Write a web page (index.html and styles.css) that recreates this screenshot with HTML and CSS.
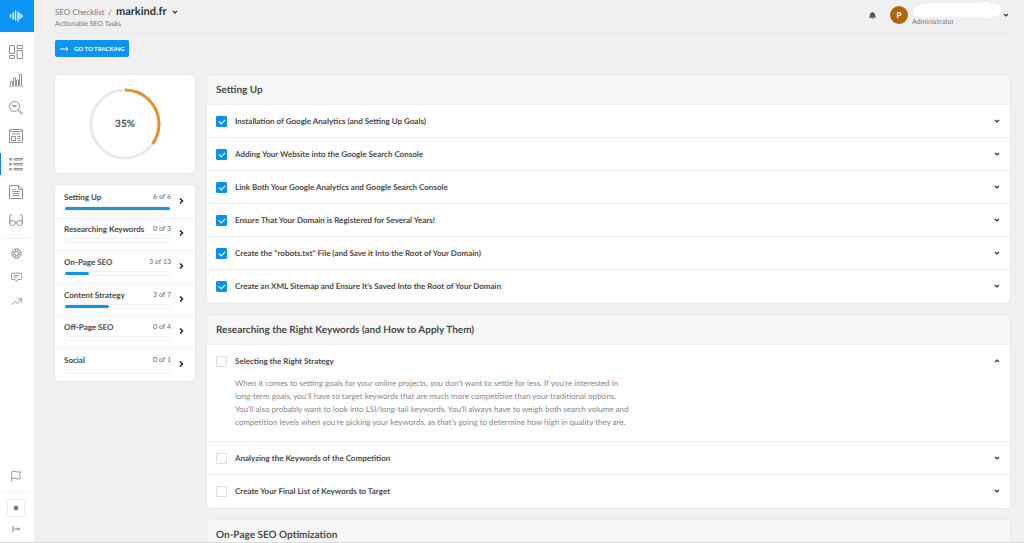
FILE: index.html
```html
<!DOCTYPE html>
<html lang="en">
<head>
<meta charset="utf-8">
<title>SEO Checklist</title>
<link rel="stylesheet" href="styles.css">
</head>
<body>
<svg class="defs" aria-hidden="true">
  <symbol id="down" viewBox="0 0 8 8"><path d="M2 3l2 2 2-2"/></symbol>
  <symbol id="up" viewBox="0 0 8 8"><path d="M2 5l2-2 2 2"/></symbol>
  <symbol id="right" viewBox="0 0 8 8"><path d="M3 1.500l2.500 2.500L3 6.500"/></symbol>
</svg>
<div class="app">
  <nav class="sidebar" aria-label="Main">
    <a class="logo" href="#" aria-label="Home"><svg viewBox="0 0 14 14"><path d="M1.500 5.500v3M4 3.500v7M6.500 1.500v10M9 2.500v10M11 4v6M13 5.500v3"/></svg></a>
    <div class="nav-main">
      <a href="#" aria-label="Dashboard"><svg viewBox="0 0 14 14"><path d="M.5.500h5v8h-5zM.5 10.500h5v3h-5zM8 .5h5.500v3H8zM8 5.500h5.500v8H8z"/></svg></a>
      <a href="#" aria-label="Rankings"><svg viewBox="0 0 14 14"><path d="M1.500 12V8.500h2V12M4.500 12V5h2v7M7.500 12V7h2v5M10.500 12V1.500h2V12M0 13h14"/></svg></a>
      <a href="#" aria-label="Keyword research"><svg viewBox="0 0 14 14"><circle cx="5.500" cy="5.500" r="5"/><path d="M3.500 4.500l2 2 2-2zM9.500 9l1 1M10 10.500l.8-.8 2.700 2.600-.9.900z"/></svg></a>
      <a href="#" aria-label="Site audit"><svg viewBox="0 0 14 14"><path d="M.5.500h13v13H.5zM.5 2.500h13M2.500 5h9M2.500 7.500h4v4h-4zM8.500 7.500h3M8.500 9.500h3M8.500 11.500h3"/></svg></a>
      <a class="active" href="#" aria-label="Checklist" aria-current="page"><svg viewBox="0 0 14 14"><path d="M.5 1.500h2v1.500h-2zM.5 6.500h2v1.500h-2zM.5 11.500h2v1.500h-2zM5 1.500h8.500v1.500H5zM5 6.500h8.500v1.500H5zM5 11.500h8.500v1.500H5z"/></svg></a>
      <a href="#" aria-label="Reports"><svg viewBox="0 0 14 14"><path d="M.5.500h9l4 4v9H.5zM9.500.5v4h4M3.500 4.500h3M3.500 6.500h7M3.500 8.500h7M3.500 10.500h7"/></svg></a>
      <a href="#" aria-label="Competitors"><svg viewBox="0 0 14 14"><circle cx="3.500" cy="10" r="2.700"/><circle cx="10.500" cy="10" r="2.700"/><path d="M6 9.500q1-1 2 0M.8 9.500V3q0-1.500 2-1.500M13.200 9.500V3q0-1.500-2-1.500"/></svg></a>
    </div>
    <div class="nav-more">
      <a href="#" aria-label="Support"><svg viewBox="0 0 14 14"><circle cx="7" cy="7" r="6"/><circle cx="7" cy="7" r="2.700"/><path d="M5.500 1.200v3.600M8.500 1.200v3.600M5.500 9.200v3.600M8.500 9.200v3.600M1.200 5.500h3.600M1.200 8.500h3.600M9.200 5.500h3.600M9.200 8.500h3.600"/></svg></a>
      <a href="#" aria-label="Feedback"><svg viewBox="0 0 14 14"><path d="M1.500 1.500h11q1 0 1 1v6q0 1-1 1H9l-2 2.500-2-2.500H1.500q-1 0-1-1v-6q0-1 1-1zM4 4.500h6M4 6.500h4"/></svg></a>
      <a href="#" aria-label="Trends"><svg viewBox="0 0 14 14"><path d="M.5 11l4.500-4 3 2.500 5-5.500M9 3.500h4.500V8"/></svg></a>
    </div>
    <div class="nav-end">
      <a href="#" aria-label="Tasks"><svg viewBox="0 0 14 14"><path d="M2 14V2q2.500-1 5 0t5.500 0l-1.500 4 1.500 4q-3 1-5.500 0T2 10"/></svg></a>
      <div class="tools">
        <button class="theme" aria-label="Theme"><svg viewBox="0 0 10 10"><circle cx="5" cy="5" r="1"/><path d="M5 2v6M2 5h6M3 3l4 4M7 3L3 7"/></svg></button>
        <button class="expand" aria-label="Expand menu"><svg viewBox="0 0 10 10"><path d="M2 2v6M3.500 5h5M7 3.500L8.500 5 7 6.500"/></svg></button>
      </div>
    </div>
  </nav>

  <div class="page">
    <header class="topbar">
      <div>
        <div class="crumbs"><a href="#">SEO Checklist</a><span>/</span><h1>markind.fr</h1><button class="chev" aria-label="Change site"><svg><use href="#down"/></svg></button></div>
        <p class="sub">Actionable SEO Tasks</p>
      </div>
      <div class="account">
        <button class="bell" aria-label="Notifications"><svg viewBox="0 0 10 10"><path d="M1 7.500q1.200-1 1.200-3.500Q2.200 1.500 5 1q2.800.5 2.800 3Q7.800 6.500 9 7.500zM4 8.300h2Q5.800 9.300 5 9.300T4 8.300z"/></svg></button>
        <span class="avatar">P</span>
        <div class="who">
          <svg class="mask" viewBox="0 0 92 17" aria-hidden="true"><path d="M3 15Q-1 11 4 6 9 2 18 2L64 2Q74 0 80 3 90 3 91 8 92 14 86 15 79 19 70 16L10 16z"/></svg>
          <span class="role">Administrator</span>
        </div>
        <button class="chev" aria-label="Account menu"><svg><use href="#down"/></svg></button>
      </div>
    </header>

    <button class="track"><svg viewBox="0 0 9 8"><path d="M0 4h8M6 2l2 2-2 2"/></svg>GO TO TRACKING</button>

    <div class="columns">
      <aside class="left">
        <div class="card score">
          <svg viewBox="0 0 72 72" role="img" aria-label="Progress ring"><circle class="ring" cx="36" cy="36" r="34"/><circle class="arc" cx="36" cy="36" r="34" pathLength="100" transform="rotate(-90 36 36)"/></svg>
          <strong>35%</strong>
        </div>
        <div class="card steps">
          <a href="#"><span>Setting Up</span><small>6 of 6</small><i class="bar"><b style="width:100%"></b></i><svg><use href="#right"/></svg></a>
          <a href="#"><span>Researching Keywords</span><small>0 of 3</small><i class="bar"><b style="width:0%"></b></i><svg><use href="#right"/></svg></a>
          <a href="#"><span>On-Page SEO</span><small>3 of 13</small><i class="bar"><b style="width:23%"></b></i><svg><use href="#right"/></svg></a>
          <a href="#"><span>Content Strategy</span><small>3 of 7</small><i class="bar"><b style="width:42%"></b></i><svg><use href="#right"/></svg></a>
          <a href="#"><span>Off-Page SEO</span><small>0 of 4</small><i class="bar"><b style="width:0%"></b></i><svg><use href="#right"/></svg></a>
          <a href="#"><span>Social</span><small>0 of 1</small><i class="bar"><b style="width:0%"></b></i><svg><use href="#right"/></svg></a>
        </div>
      </aside>

      <main class="right">
        <section class="card">
          <h2>Setting Up</h2>
          <div class="item"><div class="row"><label><input type="checkbox" checked>Installation of Google Analytics (and Setting Up Goals)</label><button class="chev" aria-label="Show details"><svg><use href="#down"/></svg></button></div></div>
          <div class="item"><div class="row"><label><input type="checkbox" checked>Adding Your Website into the Google Search Console</label><button class="chev" aria-label="Show details"><svg><use href="#down"/></svg></button></div></div>
          <div class="item"><div class="row"><label><input type="checkbox" checked>Link Both Your Google Analytics and Google Search Console</label><button class="chev" aria-label="Show details"><svg><use href="#down"/></svg></button></div></div>
          <div class="item"><div class="row"><label><input type="checkbox" checked>Ensure That Your Domain is Registered for Several Years!</label><button class="chev" aria-label="Show details"><svg><use href="#down"/></svg></button></div></div>
          <div class="item"><div class="row"><label><input type="checkbox" checked>Create the "robots.txt" File (and Save it Into the Root of Your Domain)</label><button class="chev" aria-label="Show details"><svg><use href="#down"/></svg></button></div></div>
          <div class="item"><div class="row"><label><input type="checkbox" checked>Create an XML Sitemap and Ensure It's Saved Into the Root of Your Domain</label><button class="chev" aria-label="Show details"><svg><use href="#down"/></svg></button></div></div>
        </section>
        <section class="card">
          <h2>Researching the Right Keywords (and How to Apply Them)</h2>
          <div class="item"><div class="row"><label><input type="checkbox">Selecting the Right Strategy</label><button class="chev" aria-label="Hide details"><svg><use href="#up"/></svg></button></div>
            <p class="detail">When it comes to setting goals for your online projects, you don't want to settle for less. If you're interested in long-term goals, you'll have to target keywords that are much more competitive than your traditional options. You'll also probably want to look into LSI/long-tail keywords. You'll always have to weigh both search volume and competition levels when you're picking your keywords, as that's going to determine how high in quality they are.</p></div>
          <div class="item"><div class="row"><label><input type="checkbox">Analyzing the Keywords of the Competition</label><button class="chev" aria-label="Show details"><svg><use href="#down"/></svg></button></div></div>
          <div class="item"><div class="row"><label><input type="checkbox">Create Your Final List of Keywords to Target</label><button class="chev" aria-label="Show details"><svg><use href="#down"/></svg></button></div></div>
        </section>
        <section class="card">
          <h2>On-Page SEO Optimization</h2>
        </section>
      </main>
    </div>
  </div>
</div>
</body>
</html>
```
FILE: styles.css
```css
* { box-sizing: border-box; }
body { margin: 0; background: #f0f0f0; color: #4a4a4a; font: 8px/12px Lato, "Liberation Sans", sans-serif; text-rendering: geometricPrecision; }
h1, h2, p { margin: 0; }
a { color: inherit; text-decoration: none; }
button { margin: 0; padding: 0; border: 0; background: none; color: inherit; font: inherit; cursor: pointer; }
svg { display: block; fill: none; stroke: currentColor; }
.defs { position: absolute; width: 0; height: 0; }

.app { display: flex; height: 100vh; overflow: hidden; border-bottom: 1px solid #dcdcdc; }

.sidebar { display: flex; flex-direction: column; flex: none; width: 34px; background: #fff; color: #888; }
.sidebar a { display: grid; place-items: center; padding-right: 2px; }
.sidebar .logo { height: 32px; background: #0a95f5; color: #fff; }
.logo svg { width: 14px; height: 14px; stroke-width: 1.3; }
.nav-main { padding-top: 6px; }
.nav-main a { position: relative; height: 28px; }
.nav-main svg { width: 14px; height: 14px; stroke-width: .9; }
.nav-main .active::before { content: ""; position: absolute; left: 0; top: 3px; bottom: 3px; width: 1px; background: #0a84d8; }
.nav-more { margin: 4px 3px 0; padding-top: 2px; border-top: 1px solid #f2f2f2; }
.nav-more a { height: 24px; }
.nav-more svg { width: 11px; height: 11px; stroke-width: 1.1; }
.nav-end { margin: auto 3px 0; }
.nav-end a { height: 32px; }
.nav-end a svg { width: 12px; height: 12px; stroke-width: 1; }
.tools { display: grid; justify-items: center; gap: 3px; padding: 6px 2px 4px 0; border-top: 1px solid #f2f2f2; }
.tools button { display: grid; place-items: center; width: 18px; height: 18px; color: #555; }
.tools svg { width: 10px; height: 10px; stroke-width: .8; }
.tools .theme { border: 1px solid #eee; border-radius: 2px; }
.theme circle { fill: currentColor; }

.page { flex: 1; min-width: 0; padding: 0 14px 0 21px; }
.topbar { display: flex; justify-content: space-between; height: 34px; padding-top: 5px; border-bottom: 1px solid #e6e6e6; color: #777; }
.crumbs { display: flex; align-items: center; gap: 4px; height: 13px; }
.crumbs h1 { color: #333; font-size: 11px; line-height: 13px; font-weight: 700; }
.sub { font-size: 7px; line-height: 12px; }
.chev { color: #333; }
.chev svg { width: 8px; height: 8px; stroke-width: 1.2; }
.account { display: flex; align-items: flex-start; gap: 4px; margin-top: -4px; }
.bell { padding: 10px 9px 0 0; color: #555; }
.bell svg { width: 9px; height: 9px; fill: currentColor; stroke: none; }
.avatar { display: grid; place-items: center; width: 18px; height: 18px; margin-top: 5px; border-radius: 50%; background: #b0650d; color: #fff; font-weight: 700; }
.who { margin-right: -4px; }
.mask { width: 90px; height: 17px; fill: #fff; stroke: none; }
.role { display: block; font-size: 7px; line-height: 8px; }
.account .chev { padding-top: 10px; }

.track { display: flex; align-items: center; gap: 5px; height: 17px; margin-top: 6px; padding: 0 5px; border-radius: 2px; background: #0a95f5; color: #fff; font-size: 6px; font-weight: 700; }
.track svg { width: 9px; height: 8px; stroke-width: 1; }

.columns { display: grid; grid-template-columns: 140px minmax(0, 1fr); align-items: start; gap: 12px; margin-top: 18px; }
.left, .right { display: grid; gap: 12px; }
.card { border-radius: 4px; background: #fff; box-shadow: 0 0 2px #0000001a; }
.score { display: grid; place-items: center; height: 98px; }
.score > * { grid-area: 1 / 1; }
.score svg { width: 72px; height: 72px; stroke-width: 3; }
.score strong { font-size: 10px; line-height: 14px; }
.ring { stroke: #e9e9eb; }
.arc { stroke: #e3922f; stroke-dasharray: 35 65; }
.steps { display: grid; grid-auto-rows: 1fr; min-height: 196px; }
.steps a { display: grid; grid-template-columns: 1fr auto 20px; align-content: center; padding: 0 4px 2px 9px; border-top: 1px solid #f2f2f2; }
.steps a:first-child { border-top-color: transparent; }
.steps span { font-weight: 700; }
.steps small { color: #666; font-size: 7px; }
.steps svg { grid-area: 1 / 3 / 3 / 4; place-self: center; width: 8px; height: 8px; color: #222; stroke-width: 1.5; }
.bar { grid-column: 1 / 3; height: 5px; margin-top: 3px; border: 1px solid #f1f1f1; border-radius: 3px; }
.bar b { display: block; height: 3px; border-radius: 2px; background: #1a94e2; }

h2 { height: 30px; padding-left: 9px; border-bottom: 1px solid #eee; border-radius: 4px 4px 0 0; background: #f7f7f7; font-size: 10px; line-height: 30px; font-weight: 700; }
.item { border-bottom: 1px solid #f0f0f0; }
.item:last-child { border-bottom-color: transparent; }
.row { display: flex; align-items: center; justify-content: space-between; height: 32px; padding: 0 9px; }
.row label { display: flex; align-items: center; gap: 8px; font-weight: 700; }
.row input { appearance: none; display: grid; place-items: center; width: 11px; height: 11px; margin: 0; border: 1px solid #ddd; border-radius: 1px; background: #fff; }
.row input:checked { border-color: #0a90e8; background: #0a90e8; }
.row input:checked::after { content: ""; width: 3px; height: 5px; margin-bottom: 1px; border: solid #fff; border-width: 0 1px 1px 0; transform: rotate(45deg); }
.detail { max-width: 437px; padding: 0 9px 12px 28px; color: #888; line-height: 13px; }
```
